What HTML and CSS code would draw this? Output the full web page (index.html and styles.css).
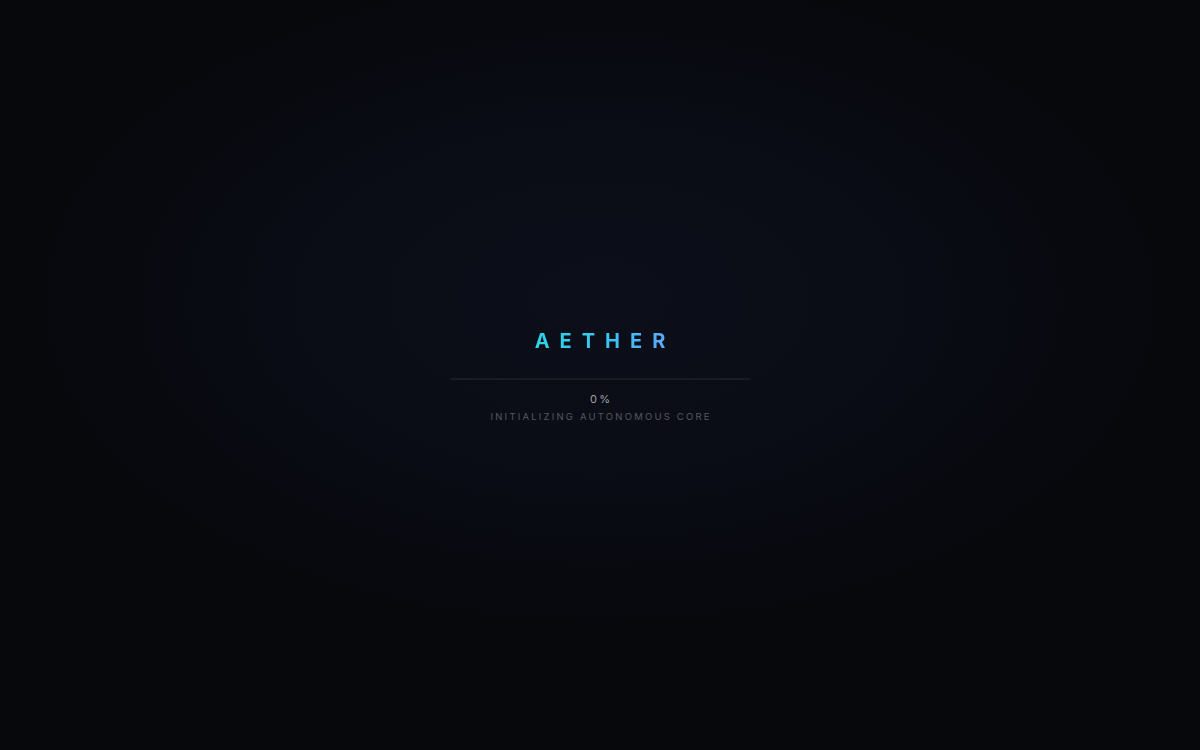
FILE: index.html
```html
<!DOCTYPE html>
<html lang="en">
<head>
<meta charset="utf-8">
<title>Aether</title>
<link rel="stylesheet" href="styles.css">
</head>
<body>
<main class="loader">
  <div class="loader-inner">
    <h1 class="brand">AETHER</h1>
    <div class="track"><div class="fill" style="width:0%"></div></div>
    <div class="percent">0%</div>
    <div class="status">INITIALIZING AUTONOMOUS CORE</div>
  </div>
</main>
</body>
</html>
```
FILE: styles.css
```css
html, body {
  margin: 0;
  padding: 0;
  height: 100%;
}
body {
  background: #07080c;
  font-family: Inter, "Noto Sans", sans-serif;
}
.loader {
  width: 100%;
  height: 100vh;
  display: flex;
  align-items: center;
  justify-content: center;
  background: radial-gradient(ellipse 52% 48% at 50% 40%, #0c0f19 0%, #0a0d16 45%, #08090f 78%, #07080b 100%);
}
.loader-inner {
  display: flex;
  flex-direction: column;
  align-items: center;
  width: 300px;
  margin-top: 4px;
}
.brand {
  margin: 0;
  font-size: 20px;
  font-weight: 700;
  letter-spacing: 0.5em;
  padding-left: 0.5em;
  line-height: 20px;
  background: linear-gradient(90deg, #2dd4e6 0%, #38c6f0 55%, #60a5fa 100%);
  -webkit-background-clip: text;
  background-clip: text;
  color: transparent;
}
.track {
  width: 300px;
  height: 2px;
  margin-top: 27px;
  background: #1a1c25;
  border-radius: 1px;
  overflow: hidden;
}
.fill {
  height: 100%;
  background: linear-gradient(90deg, #22d3ee, #60a5fa);
}
.percent {
  margin-top: 12px;
  font-size: 11px;
  letter-spacing: 0.2em;
  padding-left: 0.2em;
  color: #a0a3ab;
  line-height: 14px;
}
.status {
  margin-top: 5px;
  font-size: 9.5px;
  letter-spacing: 2.2px;
  padding-left: 2.2px;
  color: #555860;
  line-height: 12px;
  white-space: nowrap;
}
```
